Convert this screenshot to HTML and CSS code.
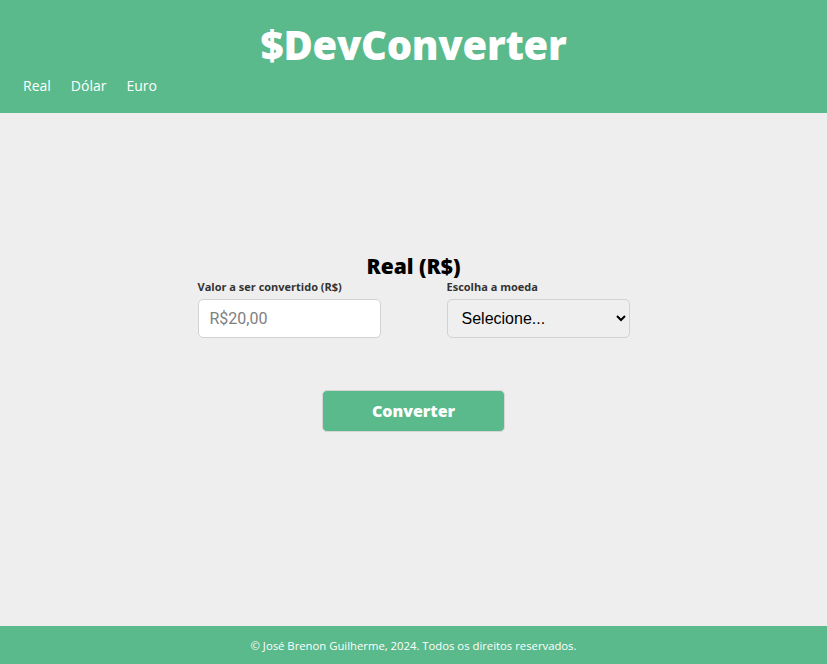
FILE: index.html
```html
<!DOCTYPE html>
<html lang="pt-BR">
<head>
<meta charset="utf-8">
<title>$DevConverter</title>
<link rel="stylesheet" href="styles.css">
</head>
<body>
<header class="header">
  <h1 class="title">$DevConverter</h1>
  <nav class="nav">
    <a href="#" class="nav-link">Real</a>
    <a href="#" class="nav-link">Dólar</a>
    <a href="#" class="nav-link">Euro</a>
  </nav>
</header>
<main class="main">
  <form class="form">
    <h2 class="form-title">Real (R$)</h2>
    <div class="fields">
      <div class="field">
        <label class="label" for="valor">Valor a ser convertido (R$)</label>
        <input class="input" id="valor" type="text" placeholder="R$20,00">
      </div>
      <div class="field">
        <label class="label" for="moeda">Escolha a moeda</label>
        <select class="select" id="moeda">
          <option>Selecione...</option>
        </select>
      </div>
    </div>
    <button type="button" class="button">Converter</button>
  </form>
</main>
<footer class="footer">
  <p class="footer-text">© José Brenon Guilherme, 2024. Todos os direitos reservados.</p>
</footer>
</body>
</html>
```
FILE: styles.css
```css
* { box-sizing: border-box; }
html, body { height: 100%; }
body {
  margin: 0;
  font-family: "Open Sans", "DejaVu Sans", sans-serif;
  background: #eeeeee;
  display: flex;
  flex-direction: column;
}
.header {
  background: #5aba8c;
  color: #fff;
  height: 113px;
  padding: 18px 23px 0;
}
.title {
  margin: 0;
  text-align: center;
  font-size: 40px;
  line-height: 54px;
  font-weight: 800;
  letter-spacing: -0.3px;
}
.nav {
  display: flex;
  gap: 20px;
  margin-top: 4px;
}
.nav-link {
  color: #fff;
  text-decoration: none;
  font-size: 14px;
  font-weight: 500;
}
.main {
  flex: 1;
  display: flex;
  justify-content: center;
  padding-top: 140px;
}
.form {
  width: 432px;
  display: flex;
  flex-direction: column;
  align-items: center;
}
.form-title {
  margin: 0;
  font-size: 21px;
  line-height: 26px;
  font-weight: 800;
  color: #000;
}
.fields {
  width: 100%;
  display: flex;
  justify-content: space-between;
}
.field {
  width: 183px;
  display: flex;
  flex-direction: column;
}
.label {
  font-size: 11px;
  font-weight: 700;
  color: #333;
  line-height: 15px;
  margin-bottom: 5px;
}
.input, .select {
  height: 39px;
  border: 1px solid #d2d2d2;
  border-radius: 5px;
  font-family: "Roboto", "Liberation Sans", sans-serif;
  font-size: 16px;
}
.input {
  background: #fff;
  padding: 0 11px;
  color: #333;
}
.input::placeholder { color: #808080; }
.select {
  background: #efefef;
  padding: 0 10px;
  color: #000;
  font-family: "Liberation Sans", Arial, sans-serif;
}
.button {
  margin-top: 52px;
  width: 183px;
  height: 42px;
  background: #5aba8c;
  color: #fff;
  border: 1px solid #d6d6d6;
  border-radius: 5px;
  font-family: "Open Sans", "DejaVu Sans", sans-serif;
  font-size: 16px;
  font-weight: 800;
}
.footer {
  background: #5aba8c;
  height: 38px;
  display: flex;
  align-items: center;
  justify-content: center;
}
.footer-text {
  margin: 0;
  color: #fff;
  font-size: 11.3px;
  font-weight: 500;
}
```
